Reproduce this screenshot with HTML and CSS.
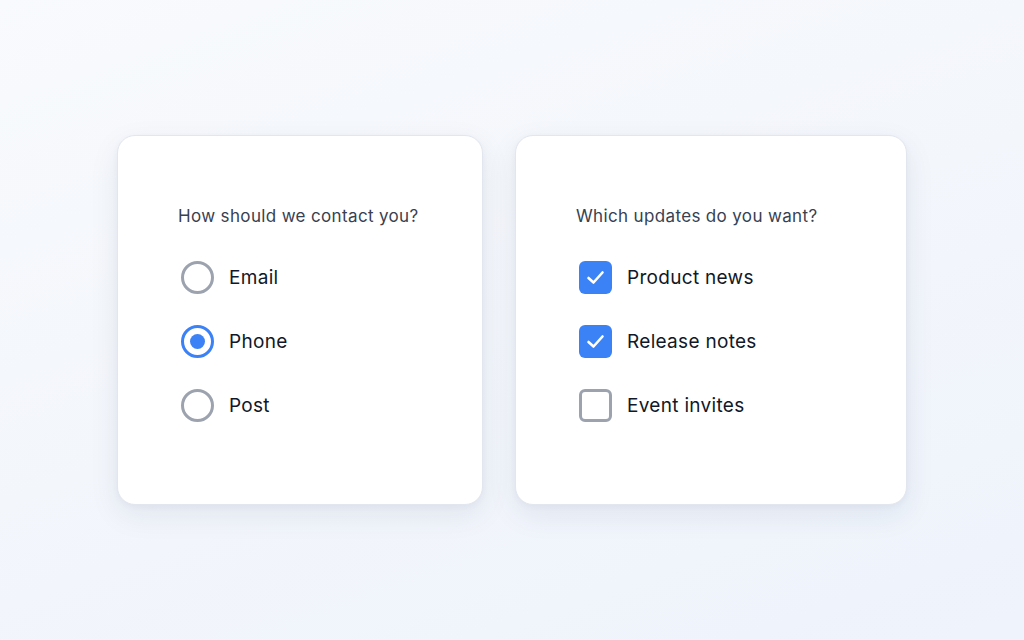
FILE: index.html
```html
<!DOCTYPE html>
<html lang="en">
<head>
<meta charset="utf-8">
<title>Preferences</title>
<link rel="stylesheet" href="styles.css">
</head>
<body>
<main class="stage">
  <section class="card card-contact">
    <h2 class="question">How should we contact you?</h2>
    <ul class="options">
      <li class="option"><span class="radio"></span><span class="label">Email</span></li>
      <li class="option"><span class="radio radio-on"></span><span class="label">Phone</span></li>
      <li class="option"><span class="radio"></span><span class="label">Post</span></li>
    </ul>
  </section>
  <section class="card card-updates">
    <h2 class="question">Which updates do you want?</h2>
    <ul class="options">
      <li class="option">
        <span class="check check-on"><svg viewBox="0 0 33 33" width="33" height="33"><path d="M9.5 17 L14.5 21.5 L23.5 11.5" fill="none" stroke="#fff" stroke-width="2.6" stroke-linecap="round" stroke-linejoin="round"/></svg></span>
        <span class="label">Product news</span>
      </li>
      <li class="option">
        <span class="check check-on"><svg viewBox="0 0 33 33" width="33" height="33"><path d="M9.5 17 L14.5 21.5 L23.5 11.5" fill="none" stroke="#fff" stroke-width="2.6" stroke-linecap="round" stroke-linejoin="round"/></svg></span>
        <span class="label">Release notes</span>
      </li>
      <li class="option"><span class="check"></span><span class="label">Event invites</span></li>
    </ul>
  </section>
</main>
</body>
</html>
```
FILE: styles.css
```css
* { box-sizing: border-box; }
html, body { margin: 0; height: 100%; }
body {
  font-family: Inter, "Noto Sans", sans-serif;
  background: linear-gradient(160deg, #f8fafd 0%, #f3f6fb 50%, #eef3fc 100%);
  color: #111827;
}
.stage {
  height: 640px;
  display: flex;
  align-items: center;
  justify-content: center;
  gap: 32px;
}
.card {
  background: #fff;
  border: 1px solid #e2e6ee;
  border-radius: 18px;
  box-shadow: 0 10px 30px rgba(30, 50, 90, 0.08), 0 2px 6px rgba(30, 50, 90, 0.04);
  padding: 68px 60px 75px;
  height: 370px;
}
.card-contact { width: 366px; }
.card-updates { width: 392px; }
.question {
  margin: 0 0 25px;
  font-size: 17px;
  line-height: 24px;
  font-weight: 400;
  letter-spacing: 0.35px;
  color: #374151;
}
.options {
  list-style: none;
  margin: 0;
  padding: 0;
  display: flex;
  flex-direction: column;
  gap: 16px;
}
.option {
  height: 48px;
  display: flex;
  align-items: center;
  gap: 15px;
  padding-left: 3px;
}
.label {
  font-size: 19px;
  letter-spacing: 0.3px;
  color: #111827;
}
.radio {
  width: 33px;
  height: 33px;
  border-radius: 50%;
  border: 3px solid #9ca3af;
  display: flex;
  align-items: center;
  justify-content: center;
  flex: none;
}
.radio-on { border-color: #3b82f6; }
.radio-on::after {
  content: "";
  width: 15px;
  height: 15px;
  border-radius: 50%;
  background: #3b82f6;
}
.check {
  width: 33px;
  height: 33px;
  border-radius: 6px;
  border: 3px solid #9ca3af;
  flex: none;
  display: flex;
  align-items: center;
  justify-content: center;
}
.check-on {
  border: none;
  background: #3b82f6;
}
.check svg { display: block; }
```
